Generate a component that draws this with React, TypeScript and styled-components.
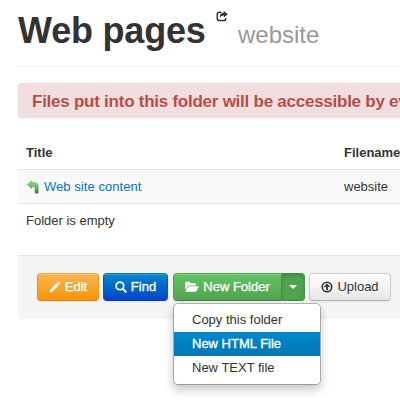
import React from 'react';
import styled, { createGlobalStyle, css } from 'styled-components';

const GlobalStyle = createGlobalStyle`
  * { box-sizing: border-box; }
  html, body { margin: 0; overflow: hidden; background: #fff; }
  body {
    font: 13px/18px "Liberation Sans", Arial, sans-serif;
    color: #333;
    white-space: nowrap;
  }
`;

const Page = styled.main`
  width: 400px;
  height: 407px;
  padding-left: 18px;
  overflow: hidden;
`;

const Header = styled.header`
  height: 67px;
  padding-top: 9px;
  border-bottom: 1px solid #eee;
  display: flex;
  align-items: flex-start;
`;

const Title = styled.h1`
  margin: 0;
  width: 198px;
  font-size: 36px;
  line-height: 43px;
  letter-spacing: -0.2px;
`;

const Subtitle = styled.small`
  margin: 14px 0 0 10px;
  font-size: 24px;
  line-height: 24px;
  color: #999;
`;

const Alert = styled.div`
  height: 35px;
  margin-top: 16px;
  padding: 0 0 0 13px;
  border: 1px solid #f0d8db;
  border-right: 0;
  border-radius: 4px 0 0 4px;
  background: #f2dede;
  color: #b94a48;
  font-size: 17px;
  font-weight: bold;
  line-height: 35px;
  letter-spacing: -0.25px;
  text-shadow: 0 1px 0 rgba(255, 255, 255, 0.5);
`;

const Table = styled.section`
  margin-top: 18px;
`;

const Row = styled.div<{ $striped?: boolean; $head?: boolean; $tall?: boolean }>`
  display: grid;
  grid-template-columns: 318px 1fr;
  align-items: start;
  height: ${(p) => (p.$head ? 33 : p.$tall ? 52 : 34)}px;
  padding: 8px 0 0 8px;
  border-top: ${(p) => (p.$head ? '0' : '1px solid #e5e5e5')};
  background: ${(p) => (p.$striped ? '#f9f9f9' : '#fff')};
  font-weight: ${(p) => (p.$head ? 'bold' : 'normal')};
`;

const FolderLink = styled.a`
  display: flex;
  gap: 4px;
  color: #0077c8;
  letter-spacing: 0.05px;
`;

const Actions = styled.footer`
  display: flex;
  align-items: flex-start;
  height: 64px;
  padding: 17px 0 0 19px;
  border-top: 1px solid #e5e5e5;
  background: #f5f5f5;
`;

type Tone = 'orange' | 'blue' | 'green' | 'caret' | 'plain';

const tones = {
  orange: css`background: linear-gradient(#fbb450, #f89406); border-color: #eda745 #f0990f #d6850e;`,
  blue: css`background: linear-gradient(#0088cc, #0044cc); border-color: #0878bd #0755c8 #003ba5;`,
  green: css`background: linear-gradient(#62c462, #51a351); border-color: #56ac56 #51a351 #438b43;`,
  caret: css`background: #51a351; border-color: #438843 #468f46 #438843; box-shadow: inset 0 2px 4px rgba(0, 0, 0, 0.15);`,
  plain: css`background: linear-gradient(#fff, #e6e6e6); border-color: #ccc #ccc #b3b3b3;`,
};

const Button = styled.button<{ $tone: Tone; $width: number }>`
  display: flex;
  align-items: center;
  justify-content: center;
  gap: 4px;
  width: ${(p) => p.$width}px;
  height: 28px;
  padding: 0;
  border: 1px solid;
  border-radius: 4px;
  color: ${(p) => (p.$tone === 'plain' ? '#333' : '#fff')};
  font: inherit;
  box-shadow: inset 0 1px 0 rgba(255, 255, 255, 0.2), 0 1px 2px rgba(0, 0, 0, 0.08);
  text-shadow: ${(p) => (p.$tone === 'plain' ? '0 1px 1px rgba(255,255,255,.75)' : '0 -1px 0 rgba(0,0,0,.25)')};
  -webkit-text-stroke: ${(p) => (p.$tone === 'plain' ? '0' : '0.35px #fff')};
  ${(p) => tones[p.$tone]}
`;

const ButtonRow = styled.div`
  display: flex;
  gap: 4px;
  > :nth-child(2) { margin-right: 1px; }
`;

const SplitButton = styled.div`
  position: relative;
  display: flex;
  > button:first-child { border-radius: 4px 0 0 4px; border-right: 0; }
  > button:nth-child(2) { border-radius: 0 4px 4px 0; }
`;

const Caret = styled.span`
  border: 4px solid transparent;
  border-top-color: #fff;
  border-bottom: 0;
`;

const Menu = styled.ul`
  position: absolute;
  top: 30px;
  left: 0;
  z-index: 2;
  width: 148px;
  height: 82px;
  margin: 0;
  padding: 4px 0;
  list-style: none;
  border: 1px solid rgba(0, 0, 0, 0.25);
  border-radius: 5px;
  background: #fff;
  background-clip: padding-box;
  box-shadow: 0 5px 10px rgba(0, 0, 0, 0.22);
`;

const MenuItem = styled.li<{ $active?: boolean }>`
  height: 24px;
  padding: 3px 0 3px 18px;
  line-height: 18px;
  ${(p) => p.$active && css`
    color: #fff;
    background: linear-gradient(#0088cc, #0077b3);
    -webkit-text-stroke: 0.35px #fff;
  `}
`;

const Icon = styled.svg<{ $drop?: number }>`
  display: block;
  flex: none;
  overflow: visible;
  margin-top: ${(p) => p.$drop ?? 0}px;
`;

const ShareIcon = () => (
  <Icon width="12" height="11" viewBox="0 0 12 11" fill="none" $drop={2}>
    <path d="M5.4 1.2H3.2Q1.3 1.2 1.3 3v4.7q0 1.8 1.9 1.8h4.7q1.8 0 1.8-1.8V7" stroke="#333" strokeWidth="1.5" />
    <path d="M7.8 0 11.8 3.2 7.8 6.4V4.6C6 4.5 4.9 5.1 4.2 7.1 3.1 4.2 4.8 1.8 7.8 1.8Z" fill="#333" />
  </Icon>
);

const UpFolderIcon = () => (
  <Icon width="14" height="15" viewBox="0 0 14 15" $drop={2}>
    <defs>
      <linearGradient id="leaf" x2="0" y2="1">
        <stop stopColor="#a5dda0" />
        <stop offset=".45" stopColor="#70bd69" />
        <stop offset="1" stopColor="#267b29" />
      </linearGradient>
    </defs>
    <path d="M1.5 4.5 5.8.8v2h2.5Q12.2 2.8 12.2 7v6.2H9V8Q9 6.6 7.8 6.6h-2v2Z" fill="url(#leaf)" stroke="#579d52" strokeWidth=".6" />
  </Icon>
);

const PencilIcon = () => (
  <Icon width="12" height="12" viewBox="0 0 12 12" fill="#fff">
    <path d="M.4 11.6 1.4 8.5 7.8 2.1 9.9 4.2 3.5 10.6ZM8.5 1.4 9.2.7Q9.8.2 10.3.7L11.3 1.7Q11.8 2.2 11.3 2.8L10.6 3.5Z" />
  </Icon>
);

const SearchIcon = () => (
  <Icon width="12" height="12" viewBox="0 0 12 12" fill="none" stroke="#fff" strokeLinecap="round">
    <circle cx="4.9" cy="4.9" r="3.8" strokeWidth="1.7" />
    <path d="m8 8 2.9 2.9" strokeWidth="2" />
  </Icon>
);

const FolderIcon = () => (
  <Icon width="14" height="12" viewBox="0 0 14 12" fill="#fff">
    <path d="M.2 8.7V2Q.2.8 1.4.8h2.8q1.2 0 1.2 1.4h4.4q1.2 0 1.2 1.2v1H4.6q-1 0-1.7.8Z" />
    <path d="M4.8 5.2h8.6q.8 0 .4.7l-2.2 3.9q-.5.9-1.5.9H1q-1 0-.5-.8l2.6-3.8q.6-.9 1.7-.9Z" />
  </Icon>
);

const UploadIcon = () => (
  <Icon width="12" height="12" viewBox="0 0 12 12">
    <circle cx="6" cy="6" r="4.7" fill="none" stroke="#333" strokeWidth="1.6" />
    <path d="M6 2.4 9 5.5 8.1 6.4 6.9 5.3V9.2H5.1V5.3L3.9 6.4 3 5.5Z" fill="#333" />
  </Icon>
);

export default function App() {
  return (
    <Page>
      <GlobalStyle />
      <Header>
        <Title>Web pages</Title>
        <ShareIcon />
        <Subtitle>website</Subtitle>
      </Header>
      <Alert>Files put into this folder will be accessible by everyone</Alert>
      <Table>
        <Row $head><span>Title</span><span>Filename</span></Row>
        <Row $striped>
          <FolderLink><UpFolderIcon />Web site content</FolderLink>
          <span>website</span>
        </Row>
        <Row $tall><span>Folder is empty</span></Row>
      </Table>
      <Actions>
        <ButtonRow>
          <Button $tone="orange" $width={62}><PencilIcon />Edit</Button>
          <Button $tone="blue" $width={65}><SearchIcon />Find</Button>
          <SplitButton>
            <Button $tone="green" $width={108}><FolderIcon />New Folder</Button>
            <Button $tone="caret" $width={24} aria-label="More"><Caret /></Button>
            <Menu>
              <MenuItem>Copy this folder</MenuItem>
              <MenuItem $active>New HTML File</MenuItem>
              <MenuItem>New TEXT file</MenuItem>
            </Menu>
          </SplitButton>
          <Button $tone="plain" $width={82}><UploadIcon />Upload</Button>
        </ButtonRow>
      </Actions>
    </Page>
  );
}
